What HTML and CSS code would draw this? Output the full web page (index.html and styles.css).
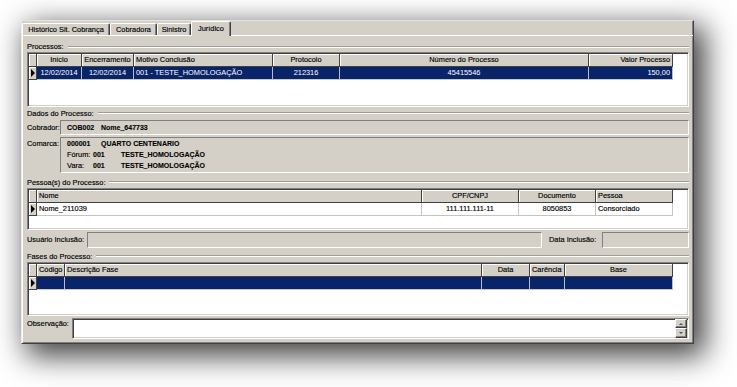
FILE: index.html
```html
<!DOCTYPE html>
<html lang="pt">
<head>
<meta charset="utf-8">
<title>Jurídico</title>
<link rel="stylesheet" href="styles.css">
</head>
<body>
<div class="window">
  <div class="tabs">
    <div class="tab t1">Histórico Sit. Cobrança</div>
    <div class="tab t2">Cobradora</div>
    <div class="tab t3">Sinistro</div>
    <div class="tab t4 active">Jurídico</div>
  </div>
  <div class="page">
    <div class="title first"><span>Processos:</span><i class="rule"></i></div>
    <div class="grid g-proc">
      <div class="row head cols-proc">
        <div class="c ind"></div>
        <div class="c center">Início</div>
        <div class="c center">Encerramento</div>
        <div class="c">Motivo Conclusão</div>
        <div class="c center">Protocolo</div>
        <div class="c center">Número do Processo</div>
        <div class="c right">Valor Processo</div>
      </div>
      <div class="row data sel cols-proc">
        <div class="c ind"><i class="arrow"></i></div>
        <div class="c center">12/02/2014</div>
        <div class="c center">12/02/2014</div>
        <div class="c">001 - TESTE_HOMOLOGAÇÃO</div>
        <div class="c center">212316</div>
        <div class="c center">45415546</div>
        <div class="c right">150,00</div>
      </div>
    </div>

    <div class="title"><span>Dados do Processo:</span><i class="rule"></i></div>
    <div class="frow cobrador">
      <div class="lbl w-cob">Cobrador:</div>
      <div class="field grow"><b class="w34">COB002</b><b>Nome_647733</b></div>
    </div>
    <div class="frow comarca">
      <div class="lbl w-cob">Comarca:</div>
      <div class="field grow lines">
        <div class="line"><b class="w34">000001</b><b>QUARTO CENTENARIO</b></div>
        <div class="line"><span class="w26">Fórum:</span><b class="w28">001</b><b>TESTE_HOMOLOGAÇÃO</b></div>
        <div class="line"><span class="w26">Vara:</span><b class="w28">001</b><b>TESTE_HOMOLOGAÇÃO</b></div>
      </div>
    </div>

    <div class="title gap3"><span>Pessoa(s) do Processo:</span><i class="rule"></i></div>
    <div class="grid g-pes">
      <div class="row head cols-pes">
        <div class="c ind"></div>
        <div class="c">Nome</div>
        <div class="c center">CPF/CNPJ</div>
        <div class="c center">Documento</div>
        <div class="c">Pessoa</div>
      </div>
      <div class="row data cols-pes">
        <div class="c ind"><i class="arrow"></i></div>
        <div class="c">Nome_211039</div>
        <div class="c center">111.111.111-11</div>
        <div class="c center">8050853</div>
        <div class="c">Consorciado</div>
      </div>
    </div>

    <div class="frow usuario">
      <div class="lbl w-usu">Usuário Inclusão:</div>
      <div class="field box-usu"></div>
      <div class="lbl w-data">Data Inclusão:</div>
      <div class="field grow"></div>
    </div>

    <div class="title gap2"><span>Fases do Processo:</span><i class="rule"></i></div>
    <div class="grid g-fas">
      <div class="row head cols-fas">
        <div class="c ind"></div>
        <div class="c">Código</div>
        <div class="c">Descrição Fase</div>
        <div class="c center">Data</div>
        <div class="c">Carência</div>
        <div class="c center">Base</div>
      </div>
      <div class="row data sel cols-fas">
        <div class="c ind"><i class="arrow"></i></div>
        <div class="c"></div>
        <div class="c"></div>
        <div class="c"></div>
        <div class="c"></div>
        <div class="c"></div>
      </div>
    </div>

    <div class="frow obs">
      <div class="lbl w-obs">Observação:</div>
      <div class="memo grow">
        <div class="sbtns">
          <div class="sbtn"><i class="up"></i></div>
          <div class="sbtn"><i class="down"></i></div>
        </div>
      </div>
    </div>
  </div>
</div>
</body>
</html>
```

FILE: styles.css
```css
* { box-sizing: border-box; }
html, body { margin: 0; padding: 0; background: #fff; }
body {
  min-height: 387px;
  padding-top: 20px;
  font-family: "Liberation Sans", Arial, sans-serif;
  font-size: 7.4px;
  color: #000;
  -webkit-text-stroke: 0.15px currentColor;
}
b { font-weight: bold; font-size: 7px; -webkit-text-stroke: 0.1px currentColor; }
i { font-style: normal; }

.window {
  margin: 0 0 0 21px;
  width: 673px;
  height: 324px;
  background: #d4d0c8;
  border-top: 1px solid #e6e4de;
  border-left: 1px solid #eeede9;
  border-right: 1px solid #404040;
  border-bottom: 1px solid #404040;
  box-shadow: inset -1px -1px 0 #808080, 8px 9px 28px 3px rgba(0,0,0,.75);
  display: flex;
  flex-direction: column;
}

/* tabs */
.tabs {
  display: flex;
  align-items: flex-end;
  height: 14px;
  position: relative;
  z-index: 1;
}
.tab {
  height: 12px;
  border-top: 1px solid #fff;
  border-left: 1px solid #fff;
  border-right: 1px solid #404040;
  box-shadow: inset -1px 0 0 #808080;
  border-radius: 2px 2px 0 0;
  display: flex;
  align-items: center;
  justify-content: center;
  white-space: nowrap;
  background: #d4d0c8;
}
.t1 { width: 88px; }
.t2 { width: 47px; }
.t3 { width: 34px; }
.t4 { width: 40px; }
.tab.active {
  height: 15px;
  margin-bottom: -1px;
  padding-bottom: 2px;
}

/* page */
.page {
  flex: 1;
  border-top: 1px solid #fff;
  border-left: 1px solid #fff;
  padding: 0 4px;
  display: flex;
  flex-direction: column;
}

.title {
  height: 12px;
  display: flex;
  align-items: center;
  white-space: nowrap;
}
.title.first { height: 11px; margin-top: 5px; }
.title.gap3 { margin-top: 3px; }
.title.gap2 { margin-top: 2px; }
.rule {
  flex: 1;
  height: 2px;
  margin-left: 4px;
  border-top: 1px solid #a09d96;
  border-bottom: 1px solid #fff;
}

/* grids */
.grid {
  background: #fff;
  border-top: 1px solid #808080;
  border-left: 1px solid #808080;
  border-right: 1px solid #fff;
  border-bottom: 1px solid #fff;
  box-shadow: inset 1px 1px 0 #404040, inset -1px -1px 0 #d4d0c8;
  padding: 1px;
}
.g-proc { height: 55px; }
.g-pes { height: 42px; }
.g-fas { height: 54px; }

.row { display: grid; height: 13px; }
.cols-proc { grid-template-columns: 8px 45px 52px 139px 67px 249px 84px; }
.cols-pes { grid-template-columns: 8px 385px 97px 77px 77px; }
.cols-fas { grid-template-columns: 8px 28px 417px 48px 35px 108px; }

.c {
  padding: 0 2px;
  line-height: 12px;
  white-space: nowrap;
  overflow: hidden;
}
.center { text-align: center; }
.right { text-align: right; }

.head .c {
  background: #d4d0c8;
  border-right: 1px solid #404040;
  border-bottom: 1px solid #404040;
  box-shadow: inset 1px 1px 0 #fff;
}
.data .c {
  border-right: 1px solid #c4c4c4;
  border-bottom: 1px solid #c4c4c4;
}
.data.sel .c {
  background: #0a246a;
  color: #fff;
  -webkit-text-stroke: 0;
  border-right-color: #b6bccb;
  border-bottom-color: #c8c8c8;
}
.data .c.ind, .data.sel .c.ind {
  background: #d4d0c8;
  border-right: 1px solid #404040;
  border-bottom: 1px solid #404040;
  box-shadow: inset 1px 1px 0 #fff;
  display: flex;
  align-items: center;
  padding: 0 0 0 2px;
}
.arrow {
  width: 0;
  height: 0;
  border-left: 4px solid #000;
  border-top: 4px solid transparent;
  border-bottom: 4px solid transparent;
}

/* form rows */
.frow { display: flex; }
.lbl { white-space: nowrap; }
.grow { flex: 1; }
.field {
  background: #d4d0c8;
  border-top: 1px solid #808080;
  border-left: 1px solid #808080;
  border-right: 1px solid #fff;
  border-bottom: 1px solid #fff;
  padding-left: 6px;
  white-space: nowrap;
}
.cobrador { height: 15px; margin-top: 1px; line-height: 13px; }
.cobrador .lbl { line-height: 15px; }
.comarca { height: 36px; margin-top: 2px; }
.comarca .lbl { line-height: 11px; padding-top: 1px; }
.lines .line { height: 11px; line-height: 11px; }
.w-cob { width: 33px; }
.w34 { display: inline-block; width: 34px; }
.w26 { display: inline-block; width: 26px; }
.w28 { display: inline-block; width: 28px; }

.usuario { height: 16px; margin-top: 2px; line-height: 16px; }
.w-usu { width: 60px; }
.box-usu { width: 455px; }
.w-data { width: 60px; padding-left: 7px; }

.obs { height: 21px; margin-top: 2px; }
.w-obs { width: 45px; line-height: 11px; }
.memo {
  background: #fff;
  border-top: 1px solid #808080;
  border-left: 1px solid #808080;
  border-right: 1px solid #fff;
  border-bottom: 1px solid #fff;
  box-shadow: inset 1px 1px 0 #404040, inset -1px -1px 0 #d4d0c8;
  display: flex;
  justify-content: flex-end;
  padding-right: 1px;
}
.sbtns { display: flex; flex-direction: column; width: 12px; }
.sbtn {
  height: 9px;
  background: #d4d0c8;
  border-top: 1px solid #fff;
  border-left: 1px solid #fff;
  border-right: 1px solid #404040;
  border-bottom: 1px solid #404040;
  box-shadow: inset -1px -1px 0 #808080;
  display: flex;
  align-items: center;
  justify-content: center;
}
.sbtn + .sbtn { height: 10px; }
.up, .down {
  width: 0;
  height: 0;
  border-left: 2px solid transparent;
  border-right: 2px solid transparent;
}
.up { border-bottom: 2px solid #555; }
.down { border-top: 2px solid #555; }
```
